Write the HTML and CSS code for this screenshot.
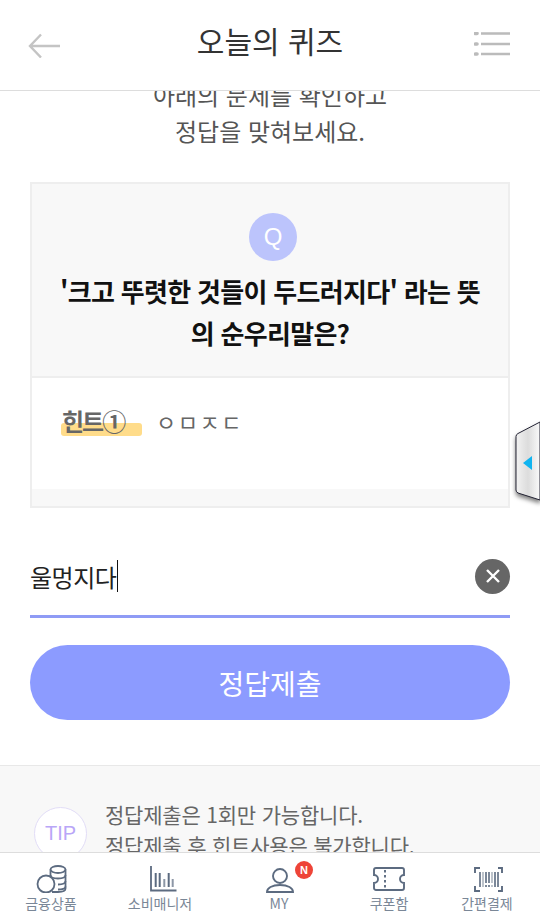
FILE: index.html
```html
<!DOCTYPE html>
<html lang="ko">
<head>
  <meta charset="UTF-8" />
  <meta name="viewport" content="width=device-width, initial-scale=1.0"/>
  <title>오늘의 퀴즈</title>
  <link rel="stylesheet" href="styles.css">
</head>
<body>
  <header class="top-bar">
    <svg class="back-icon" width="34" height="26" viewBox="0 0 34 26" fill="none" stroke="#c4c4c4" stroke-width="2.4">
      <path d="M34 14H4M15 2.500 4 14l11 11.500"/>
    </svg>
    <h1>오늘의 퀴즈</h1>
    <svg class="menu-icon" width="36" height="26" viewBox="0 0 36 26" fill="none" stroke="#bbb" stroke-width="2.6">
      <path d="M7 1.500h29M7 12h29M7 22h29"/>
      <path d="M1.500 1.500h1.500M1.500 12h1.500M1.500 22h1.500" stroke-linecap="round" stroke-width="3.600"/>
    </svg>
  </header>

  <main class="content">
    <p class="intro">아래의 문제를 확인하고<br>정답을 맞혀보세요.</p>

    <section class="quiz-card">
      <div class="question">
        <div class="q-badge">Q</div>
        <p>'크고 뚜렷한 것들이 두드러지다' 라는 뜻<br>의 순우리말은?</p>
      </div>
      <div class="hint">
        <span class="hint-label">힌트①</span>
        <span class="hint-value">ㅇㅁㅈㄷ</span>
      </div>
      <div class="card-foot"></div>
    </section>

    <div class="answer">
      <span class="answer-text">울멍지다</span><span class="caret"></span>
      <button class="clear" aria-label="지우기">
        <svg width="16" height="16" viewBox="0 0 16 16" stroke="#fff" stroke-width="2.4"><path d="M2 2l12 12M14 2 2 14"/></svg>
      </button>
    </div>

    <button class="submit">정답제출</button>

    <section class="tip">
      <div class="tip-badge">TIP</div>
      <p>정답제출은 1회만 가능합니다.<br>정답제출 후 힌트사용은 불가합니다.</p>
    </section>
  </main>

  <nav class="tab-bar">
    <a class="tab">
      <svg width="36" height="28" viewBox="0 0 36 28" fill="none" stroke="#5c6b80" stroke-width="1.800">
        <ellipse cx="25" cy="4.500" rx="7.500" ry="3.500"/>
        <path d="M17.500 4.500v12M32.500 4.500v19c0 2-3 3.500-7.500 3.500h-6"/>
        <path d="M17.500 10c0 2 3 3.500 7.500 3.500s7.500-1.500 7.500-3.500M32.500 16c0 2-3 3.500-7.500 3.500M32.500 21.500c0 2-3 3-7.500 3"/>
        <circle cx="13" cy="19" r="8.500" fill="#fff"/>
      </svg>
      <span>금융상품</span>
    </a>
    <a class="tab">
      <svg width="34" height="28" viewBox="0 0 34 28" fill="none" stroke="#5c6b80">
        <path d="M8 1v24.500h25.500" stroke-width="1.800"/>
        <path d="M12.700 8v14M16.700 8v14M25.700 8v14" stroke-width="2"/>
        <path d="M21.300 14v8M29.700 14v8" stroke-width="2" opacity="0.700"/>
      </svg>
      <span>소비매니저</span>
    </a>
    <a class="tab">
      <span class="tab-icon">
        <svg width="30" height="28" viewBox="0 0 30 28" fill="none" stroke="#5c6b80" stroke-width="1.900">
          <circle cx="16" cy="11" r="7"/>
          <path d="M3 27c0-4 5-7 13-7s13 3 13 7z"/>
        </svg>
        <i class="new-badge">N</i>
      </span>
      <span>MY</span>
    </a>
    <a class="tab">
      <svg width="32" height="28" viewBox="0 0 32 28" fill="none" stroke="#5c6b80" stroke-width="1.900">
        <path d="M3 3h26a2 2 0 0 1 2 2v5a4 4 0 0 0 0 8v5a2 2 0 0 1-2 2H3a2 2 0 0 1-2-2v-5a4 4 0 0 0 0-8V5a2 2 0 0 1 2-2z"/>
        <path d="M12 5v18" stroke-dasharray="2.500 2.500"/>
      </svg>
      <span>쿠폰함</span>
    </a>
    <a class="tab">
      <svg width="32" height="28" viewBox="0 0 32 28" fill="none" stroke="#5c6b80" stroke-width="1.900">
        <path d="M4 8V3h5M27 3h4v5M4 21v5h5M31 21v5h-4"/>
        <path d="M9 7v15M15 7v11M15 20v2M18 7v11M18 20v2M24 7v15M27 7v15" stroke-width="1.600"/>
        <path d="M12 7v15M21 7v11M21 20v2" stroke-width="1.600" opacity="0.500"/>
      </svg>
      <span>간편결제</span>
    </a>
  </nav>

  <svg class="side-handle" width="26" height="90" viewBox="0 0 26 90">
    <defs>
      <linearGradient id="handleFill">
        <stop offset="0" stop-color="#f2f2f2"/>
        <stop offset="0.5" stop-color="#dcdcdc"/>
        <stop offset="1" stop-color="#fafafa"/>
      </linearGradient>
    </defs>
    <path d="M4 13.500 26 2v78L4 73q-2-1-2-3V16.500q0-2 2-3z" fill="url(#handleFill)" stroke="#223" stroke-width="1"/>
    <path d="M9 43l9-7v14z" fill="#10b4f0"/>
  </svg>
</body>
</html>
```

FILE: styles.css
```css
* {
  box-sizing: border-box;
}

body {
  margin: 0;
  height: 922px;
  display: flex;
  flex-direction: column;
  overflow: hidden;
  background-color: #fff;
  color: #333;
  font-family: "Noto Sans CJK KR", "Liberation Sans", sans-serif;
}

.top-bar {
  flex: none;
  height: 91px;
  display: grid;
  grid-template-columns: 1fr auto 1fr;
  align-items: center;
  padding: 0 30px;
  border-bottom: 1px solid #ddd;
}

.top-bar h1 {
  margin: 0 0 10px;
  font-size: 30px;
  font-weight: 400;
  color: #333;
}

.back-icon {
  margin-left: -4px;
}

.menu-icon {
  justify-self: end;
}

.content {
  flex: 1;
  min-height: 0;
  overflow: hidden;
}

.intro {
  margin: -14px 0 33px;
  font-size: 24px;
  line-height: 36px;
  text-align: center;
  color: #555;
}

.quiz-card {
  margin: 0 30px;
  border: 2px solid #eee;
  background-color: #f8f8f8;
}

.question {
  height: 194px;
  padding-top: 29px;
  text-align: center;
  border-bottom: 2px solid #eee;
}

.q-badge {
  width: 48px;
  height: 48px;
  margin: 0 0 9px 217px;
  border-radius: 50%;
  background-color: #bcc4fc;
  color: #fff;
  font-family: "Liberation Sans", sans-serif;
  font-size: 24px;
  line-height: 48px;
}

.question p {
  margin: 0;
  font-size: 26px;
  font-weight: 700;
  line-height: 42px;
  letter-spacing: -0.7px;
  color: #111;
}

.hint {
  height: 111px;
  padding: 28px 0 0 29px;
  display: flex;
  align-items: flex-start;
  background-color: #fff;
}

.hint-label {
  position: relative;
  z-index: 0;
  width: 81px;
  height: 30px;
  margin-right: 14px;
  padding-left: 1px;
  font-size: 24px;
  font-weight: 700;
  line-height: 30px;
  letter-spacing: -2px;
  color: #666;
}

.hint-label::before {
  content: "";
  position: absolute;
  z-index: -1;
  top: 17px;
  left: 0;
  right: 0;
  height: 13px;
  border-radius: 3px;
  background-color: #ffdc8a;
}

.hint-value {
  font-size: 22px;
  line-height: 30px;
  color: #666;
  letter-spacing: 1.5px;
}

.card-foot {
  height: 17px;
}

.answer {
  margin: 39px 30px 0;
  height: 71px;
  display: flex;
  align-items: center;
  border-bottom: 3px solid #8f9bf5;
  padding-bottom: 10px;
}

.answer-text {
  font-size: 24px;
  color: #222;
  letter-spacing: -0.5px;
}

.caret {
  width: 1px;
  height: 32px;
  margin-left: 1px;
  background-color: #111;
}

.clear {
  width: 35px;
  height: 35px;
  margin-left: auto;
  padding: 0;
  border: none;
  border-radius: 50%;
  background-color: #666;
  display: flex;
  align-items: center;
  justify-content: center;
}

.submit {
  display: block;
  width: 480px;
  height: 75px;
  margin: 27px 30px 45px;
  border: none;
  border-radius: 38px;
  background-color: #8c9bff;
  color: #fff;
  font-family: inherit;
  font-size: 28px;
}

.tip {
  min-height: 200px;
  padding: 33px 34px;
  display: flex;
  gap: 18px;
  background-color: #f8f8f8;
  border-top: 1px solid #e8e8e8;
}

.tip-badge {
  flex: none;
  width: 53px;
  height: 53px;
  margin-top: 8px;
  border: 1px solid #e2ddf7;
  border-radius: 50%;
  background-color: #fff;
  color: #b9a6f7;
  font-family: "Liberation Sans", sans-serif;
  font-size: 20px;
  line-height: 51px;
  text-align: center;
}

.tip p {
  margin: 0;
  font-size: 21px;
  line-height: 31px;
  letter-spacing: -0.2px;
  color: #666;
  white-space: nowrap;
}

.tab-bar {
  flex: none;
  height: 70px;
  display: grid;
  grid-template-columns: 102px 116px 122px 98px 98px;
  padding-top: 12px;
  background-color: #fff;
  border-top: 1px solid #ddd;
}

.tab {
  display: flex;
  flex-direction: column;
  align-items: center;
}

.tab svg {
  display: block;
}

.tab > span:last-child {
  font-size: 14px;
  line-height: 20px;
  color: #7a8797;
}

.tab-icon {
  position: relative;
  display: block;
}

.new-badge {
  position: absolute;
  top: -4px;
  right: -19px;
  width: 18px;
  height: 18px;
  border-radius: 50%;
  background-color: #ee4438;
  color: #fff;
  font-family: "Liberation Sans", sans-serif;
  font-size: 11px;
  font-style: normal;
  font-weight: 700;
  line-height: 18px;
  text-align: center;
}

.side-handle {
  position: absolute;
  top: 420px;
  left: 514px;
  overflow: visible;
  filter: drop-shadow(0 3px 2px rgba(0, 0, 0, 0.5));
}
```
